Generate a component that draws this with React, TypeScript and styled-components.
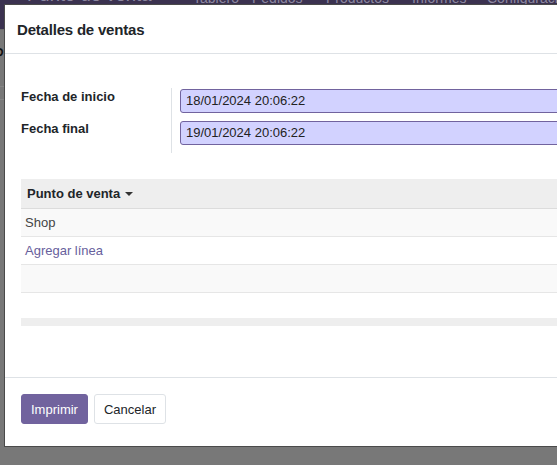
import React from "react";
import styled, { createGlobalStyle } from "styled-components";

const GlobalStyle = createGlobalStyle`
  html, body {
    margin: 0;
    padding: 0;
    width: 557px;
    height: 465px;
    overflow: hidden;
    background: #787878;
    font-family: "Liberation Sans", Arial, sans-serif;
  }
  * { box-sizing: border-box; }
`;

const Page = styled.div`
  position: relative;
  width: 557px;
  height: 465px;
  overflow: hidden;
  background: #787878;
`;

const NavBar = styled.div`
  height: 29px;
  background: #3b3250;
  display: flex;
  align-items: flex-end;
  padding: 0 0 24px 27px;
  color: #8d88a0;
  white-space: nowrap;
  overflow: hidden;
`;

const Brand = styled.span`
  flex: 0 0 166px;
  font-size: 18.5px;
  line-height: 20px;
`;

const NavItem = styled.span<{ $w: number }>`
  flex: 0 0 ${(p) => p.$w}px;
  font-size: 14px;
  line-height: 14px;
`;

const ControlPanel = styled.div`
  height: 57px;
  border-top: 1px solid #6e6e6e;
  display: flex;
  align-items: center;
  padding-bottom: 6px;
`;

const Crumb = styled.span`
  font-size: 18px;
  color: #111;
  margin-left: -8px;
`;

const Rule = styled.div`
  height: 13px;
  border-top: 1px solid #858585;
`;

const Modal = styled.div`
  position: absolute;
  left: 4px;
  top: 4px;
  width: 640px;
  background: #fff;
  border: 1px solid #4a4a4a;
  display: flex;
  flex-direction: column;
`;

const Header = styled.div`
  height: 49px;
  border-bottom: 1px solid #dee2e6;
  display: flex;
  align-items: center;
  padding: 0 12px;
`;

const Title = styled.h4`
  margin: 0;
  font-size: 15px;
  font-weight: 700;
  letter-spacing: -0.2px;
  color: #212529;
`;

const Body = styled.div`
  padding: 34px 16px 51px 16px;
  display: flex;
  flex-direction: column;
`;

const FormGroup = styled.div`
  display: grid;
  grid-template-columns: 150px 1fr;
  height: 65px;
`;

const LabelCol = styled.div`
  display: flex;
  flex-direction: column;
  gap: 8px;
  padding-top: 1px;
`;

const Label = styled.div`
  height: 24px;
  font-size: 13px;
  line-height: 16px;
  font-weight: 700;
  color: #212529;
`;

const FieldCol = styled.div`
  border-left: 1px solid #dee2e6;
  padding: 1px 0 8px 8px;
  display: flex;
  flex-direction: column;
  gap: 8px;
`;

const DateInput = styled.div`
  height: 24px;
  background: #d2d2ff;
  border: 1px solid #71639e;
  border-radius: 3px;
  padding: 0 5px;
  font-size: 13px;
  line-height: 22px;
  color: #222;
`;

const Table = styled.div`
  margin-top: 26px;
  display: flex;
  flex-direction: column;
`;

const HeadRow = styled.div`
  height: 30px;
  background: #eeeeee;
  border-bottom: 1px solid #dcdcdc;
  display: flex;
  align-items: center;
  padding-left: 6px;
  font-size: 13px;
  font-weight: 700;
  color: #212529;
  gap: 5px;
`;

const Caret = styled.span`
  width: 0;
  height: 0;
  border-left: 4px solid transparent;
  border-right: 4px solid transparent;
  border-top: 4px solid #333;
  margin-top: 1px;
`;

const Row = styled.div<{ $shaded?: boolean; $link?: boolean }>`
  height: 28px;
  border-bottom: 1px solid #e6e6e6;
  background: ${(p) => (p.$shaded ? "#f9f9f9" : "#fff")};
  display: flex;
  align-items: center;
  padding-left: 4px;
  font-size: 13px;
  color: ${(p) => (p.$link ? "#67609c" : "#444")};
`;

const Spacer = styled.div`
  height: 25px;
`;

const TableFoot = styled.div`
  height: 8px;
  background: #eeeeee;
`;

const Footer = styled.div`
  border-top: 1px solid #dee2e6;
  padding: 16px 16px 22px 16px;
  display: flex;
  gap: 6px;
`;

const Button = styled.button<{ $primary?: boolean }>`
  height: 30px;
  padding: 0 9px;
  border-radius: 3px;
  font-family: "Liberation Sans", Arial, sans-serif;
  font-size: 13px;
  border: 1px solid ${(p) => (p.$primary ? "#71639e" : "#dee2e6")};
  background: ${(p) => (p.$primary ? "#71639e" : "#fff")};
  color: ${(p) => (p.$primary ? "#fff" : "#212529")};
  cursor: pointer;
`;

export default function App() {
  return (
    <Page>
      <GlobalStyle />
      <NavBar>
        <Brand>Punto de venta</Brand>
        <NavItem $w={59}>Tablero</NavItem>
        <NavItem $w={74}>Pedidos</NavItem>
        <NavItem $w={86}>Productos</NavItem>
        <NavItem $w={75}>Informes</NavItem>
        <NavItem $w={100}>Configuración</NavItem>
      </NavBar>
      <ControlPanel>
        <Crumb>Po</Crumb>
      </ControlPanel>
      <Rule />
      <Rule />

      <Modal>
        <Header>
          <Title>Detalles de ventas</Title>
        </Header>
        <Body>
          <FormGroup>
            <LabelCol>
              <Label>Fecha de inicio</Label>
              <Label>Fecha final</Label>
            </LabelCol>
            <FieldCol>
              <DateInput>18/01/2024 20:06:22</DateInput>
              <DateInput>19/01/2024 20:06:22</DateInput>
            </FieldCol>
          </FormGroup>
          <Table>
            <HeadRow>
              Punto de venta <Caret />
            </HeadRow>
            <Row $shaded>Shop</Row>
            <Row $link>Agregar línea</Row>
            <Row $shaded />
            <Spacer />
            <TableFoot />
          </Table>
        </Body>
        <Footer>
          <Button $primary>Imprimir</Button>
          <Button>Cancelar</Button>
        </Footer>
      </Modal>
    </Page>
  );
}
